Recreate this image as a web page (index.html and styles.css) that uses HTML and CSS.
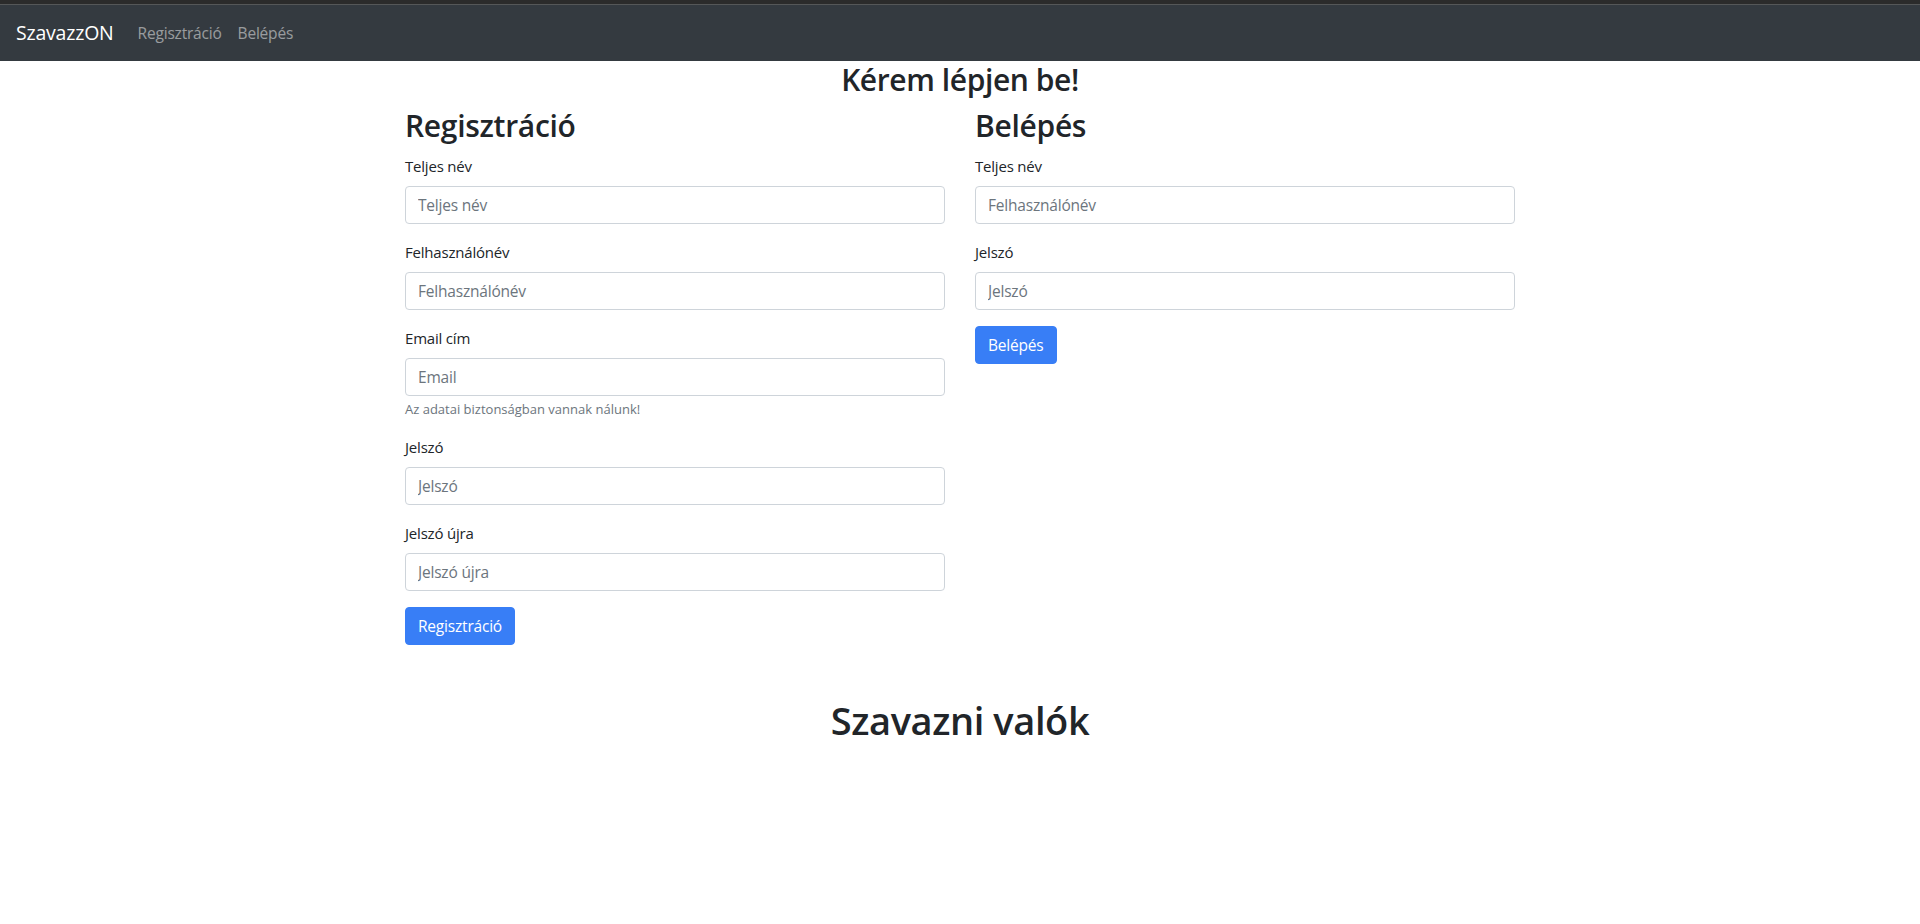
FILE: index.html
```html
<!DOCTYPE html>
<html lang="hu">
<head>
<meta charset="utf-8">
<title>SzavazzON</title>
<link rel="stylesheet" href="styles.css">
</head>
<body>
<div class="topstrip"></div>
<nav class="navbar">
  <a class="brand" href="#">SzavazzON</a>
  <ul class="nav">
    <li><a class="nav-link" href="#">Regisztráció</a></li>
    <li><a class="nav-link" href="#">Belépés</a></li>
  </ul>
</nav>
<main class="container">
  <h2 class="title">Kérem lépjen be!</h2>
  <div class="row">
    <section class="col">
      <h2 class="col-title">Regisztráció</h2>
      <form>
        <div class="form-group">
          <label>Teljes név</label>
          <input class="form-control" type="text" placeholder="Teljes név">
        </div>
        <div class="form-group">
          <label>Felhasználónév</label>
          <input class="form-control" type="text" placeholder="Felhasználónév">
        </div>
        <div class="form-group">
          <label>Email cím</label>
          <input class="form-control" type="email" placeholder="Email">
          <small class="form-text">Az adatai biztonságban vannak nálunk!</small>
        </div>
        <div class="form-group">
          <label>Jelszó</label>
          <input class="form-control" type="password" placeholder="Jelszó">
        </div>
        <div class="form-group">
          <label>Jelszó újra</label>
          <input class="form-control" type="password" placeholder="Jelszó újra">
        </div>
        <button class="btn" type="button">Regisztráció</button>
      </form>
    </section>
    <section class="col">
      <h2 class="col-title">Belépés</h2>
      <form>
        <div class="form-group">
          <label>Teljes név</label>
          <input class="form-control" type="text" placeholder="Felhasználónév">
        </div>
        <div class="form-group">
          <label>Jelszó</label>
          <input class="form-control" type="password" placeholder="Jelszó">
        </div>
        <button class="btn" type="button">Belépés</button>
      </form>
    </section>
  </div>
  <h1 class="vote-title">Szavazni valók</h1>
</main>
</body>
</html>
```

FILE: styles.css
```css
* { box-sizing: border-box; }

html, body {
  margin: 0;
  padding: 0;
}

body {
  font-family: "Open Sans", "Noto Sans", sans-serif;
  font-size: 16px;
  line-height: 24px;
  color: #212529;
  background: #fff;
}

.topstrip {
  height: 5px;
  background: #2b2b2b;
  border-bottom: 1px solid #555758;
}

.navbar {
  display: flex;
  align-items: center;
  height: 56px;
  padding: 8px 16px;
  background: #343a40;
}

.brand {
  color: #fff;
  text-decoration: none;
  font-size: 19.5px;
  line-height: 30px;
  margin-right: 16px;
  letter-spacing: -0.2px;
}

.nav {
  display: flex;
  list-style: none;
  margin: 0;
  padding: 0;
}

.nav-link {
  display: block;
  padding: 8px;
  color: rgba(255, 255, 255, 0.5);
  text-decoration: none;
  font-size: 15.5px;
  line-height: 24px;
  letter-spacing: -0.2px;
}

.container {
  width: 1140px;
  margin: 0 auto;
  padding: 0 15px;
}

h1, h2 {
  margin: 0 0 8px;
  font-weight: 600;
  color: #212529;
}

.title {
  font-size: 30px;
  line-height: 38.4px;
  text-align: center;
  letter-spacing: -0.4px;
}

.row {
  display: flex;
  margin: 0 -15px;
}

.col {
  flex: 0 0 50%;
  padding: 0 15px;
}

.col-title {
  font-size: 30px;
  line-height: 38.4px;
  letter-spacing: -0.3px;
}

.form-group {
  margin-bottom: 16px;
}

label {
  display: inline-block;
  margin-bottom: 8px;
  font-size: 15px;
  line-height: 24px;
  letter-spacing: -0.2px;
}

.form-control {
  display: block;
  width: 100%;
  height: 38px;
  padding: 6px 12px;
  font-family: inherit;
  font-size: 15.5px;
  line-height: 24px;
  color: #495057;
  background: #fff;
  border: 1px solid #ced4da;
  border-radius: 4px;
  letter-spacing: -0.2px;
}

.form-control::placeholder {
  color: #6c757d;
  opacity: 1;
}

.form-text {
  display: block;
  margin-top: 4px;
  font-size: 13px;
  line-height: 19.2px;
  color: #6c757d;
}

.btn {
  display: inline-block;
  height: 38px;
  padding: 6px 12px;
  font-family: inherit;
  font-size: 15.5px;
  line-height: 24px;
  color: #fff;
  background: #387ef6;
  border: 1px solid #387ef6;
  border-radius: 4px;
  letter-spacing: -0.2px;
}

.vote-title {
  margin-top: 51px;
  font-size: 38px;
  line-height: 48px;
  text-align: center;
  letter-spacing: -0.4px;
}
```
